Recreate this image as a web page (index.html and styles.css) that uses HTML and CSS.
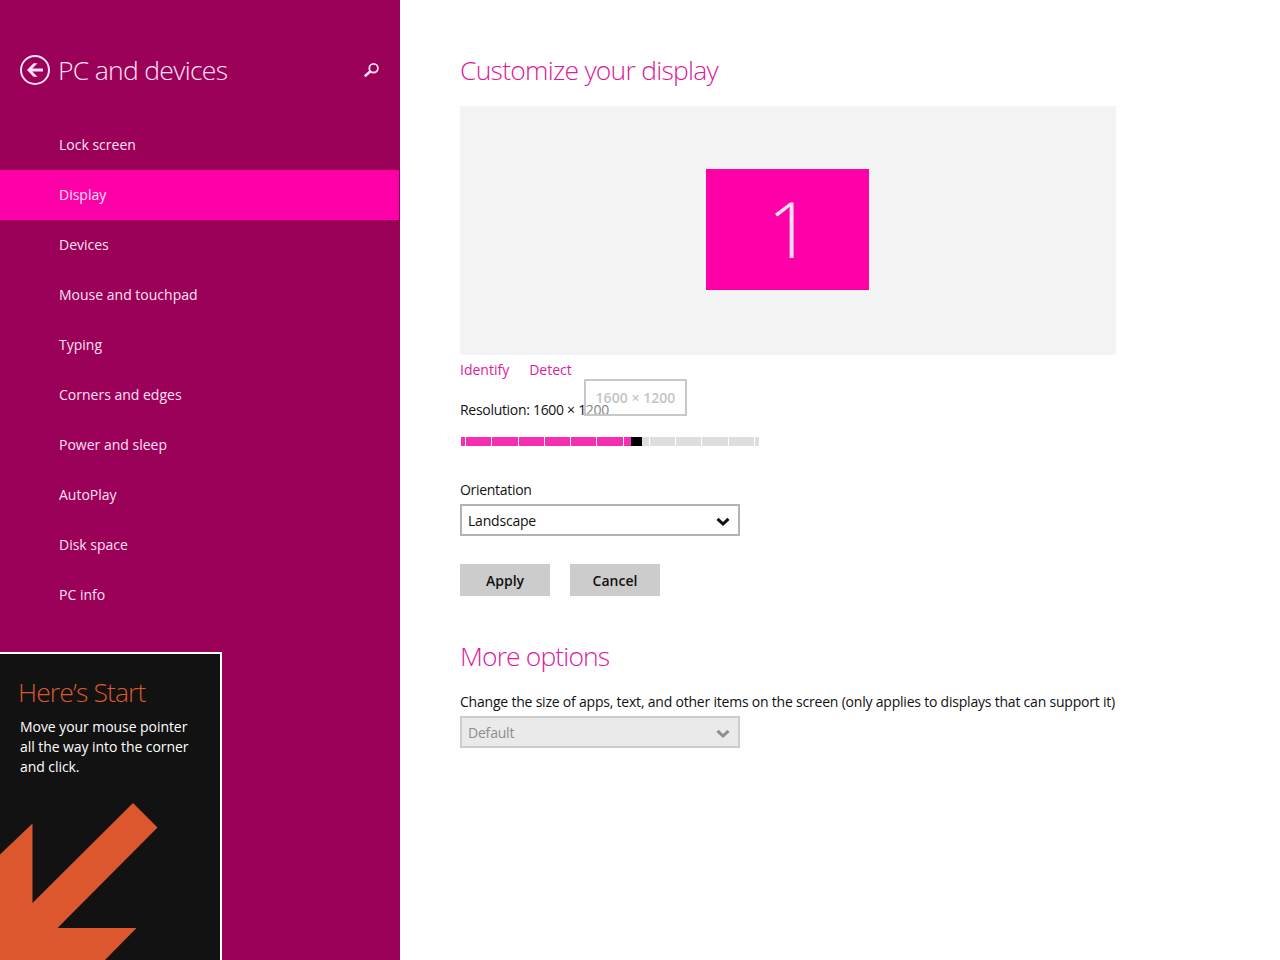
FILE: index.html
```html
<!DOCTYPE html>
<html lang="en">
<head>
    <meta charset="UTF-8">
    <meta name="viewport" content="width=device-width, initial-scale=1.0">
    <title>PC and devices</title>
    <link rel="stylesheet" href="styles.css">
</head>
<body>
    <aside class="sidebar">
        <header class="sidebar-header">
            <a href="#" class="back" aria-label="Back">
                <svg width="30" height="30" viewBox="0 0 30 30">
                    <circle cx="15" cy="15" r="14" fill="none" stroke="currentColor" stroke-width="2"/>
                    <path d="M7 15l6.5-6.8h4L12.3 13.5H23v3H12.3l5.2 5.3h-4z" fill="currentColor"/>
                </svg>
            </a>
            <h1>PC and devices</h1>
            <a href="#" class="search" aria-label="Search">
                <svg width="16" height="16" viewBox="0 0 16 16" fill="none" stroke="currentColor">
                    <circle cx="9.600" cy="6.200" r="4.300" stroke-width="1.800"/>
                    <path d="M6.500 9.300L0.800 14.200" stroke-width="2.500"/>
                </svg>
            </a>
        </header>
        <ul class="navbar">
            <li><a href="#">Lock screen</a></li>
            <li><a href="#" class="active">Display</a></li>
            <li><a href="#">Devices</a></li>
            <li><a href="#">Mouse and touchpad</a></li>
            <li><a href="#">Typing</a></li>
            <li><a href="#">Corners and edges</a></li>
            <li><a href="#">Power and sleep</a></li>
            <li><a href="#">AutoPlay</a></li>
            <li><a href="#">Disk space</a></li>
            <li><a href="#">PC info</a></li>
        </ul>

        <!-- Start corner hint -->
        <div class="hint">
            <h2>Here’s Start</h2>
            <p>Move your mouse pointer<br>all the way into the corner<br>and click.</p>
            <svg class="hint-arrow" width="158" height="158" viewBox="0 802 158 158">
                <path d="M133 803L157.500 827.500L57.500 928H136.500L105 960H0V854.500L32.500 823.500V903z" fill="#dc572e"/>
            </svg>
        </div>
    </aside>

    <main class="content">
        <h2>Customize your display</h2>
        <div class="preview">
            <div class="monitor">1</div>
        </div>
        <div class="links">
            <a href="#">Identify</a>
            <a href="#">Detect</a>
        </div>

        <div class="resolution">
            <p>Resolution: 1600 × 1200</p>
            <div class="tooltip">1600 × 1200</div>
        </div>
        <div class="slider">
            <span class="edge"></span>
            <span></span><span></span><span></span><span></span><span></span><span></span>
            <span></span><span></span><span></span><span></span><span></span>
            <i class="thumb"></i>
        </div>

        <p class="label">Orientation</p>
        <div class="select">
            <span>Landscape</span>
            <svg width="14" height="10" viewBox="0 0 14 10"><path d="M1.500 1.800L7 7L12.500 1.800" fill="none" stroke="currentColor" stroke-width="3"/></svg>
        </div>
        <div class="buttons">
            <button type="button">Apply</button>
            <button type="button">Cancel</button>
        </div>

        <h2 class="title-more">More options</h2>
        <p class="size-label">Change the size of apps, text, and other items on the screen (only applies to displays that can support it)</p>
        <div class="select disabled">
            <span>Default</span>
            <svg width="14" height="10" viewBox="0 0 14 10"><path d="M1.500 1.800L7 7L12.500 1.800" fill="none" stroke="currentColor" stroke-width="3"/></svg>
        </div>
    </main>
</body>
</html>
```
FILE: styles.css
```css
* {
    margin: 0;
    padding: 0;
    box-sizing: border-box;
}

body {
    display: flex;
    height: 960px;
    overflow: hidden;
    background: #fff;
    color: #111;
    font-family: 'Open Sans', sans-serif;
    font-size: 14px;
    line-height: 20px;
    letter-spacing: -0.3px;
}

a {
    color: inherit;
    text-decoration: none;
}

h1, h2 {
    font-size: 26.5px;
    font-weight: 300;
    line-height: 36px;
    white-space: nowrap;
}

/* Sidebar */
.sidebar {
    position: relative;
    width: 400px;
    flex-shrink: 0;
    background: #9b0058;
    color: #ffe0f6;
}

.sidebar-header {
    display: flex;
    align-items: center;
    height: 120px;
    padding: 20px 20px 0;
}

.back, .search {
    display: flex;
}

.sidebar-header h1 {
    flex: 1;
    margin-left: 8px;
    letter-spacing: -0.7px;
}

.navbar {
    list-style-type: none;
    letter-spacing: 0;
}

.navbar a {
    display: block;
    width: 399px;
    height: 50px;
    padding-left: 59px;
    line-height: 50px;
}

.navbar a.active {
    background: #ff00a8;
}

/* Corner hint */
.hint {
    position: absolute;
    left: 0;
    bottom: 0;
    width: 222px;
    height: 308px;
    border: solid #fff;
    border-width: 2px 2px 0 0;
    padding: 20px 0 0 20px;
    background: #111211;
    color: #fff;
}

.hint h2 {
    margin-left: -2px;
    color: #dc572e;
    letter-spacing: -0.88px;
}

.hint p {
    margin-top: 7px;
    letter-spacing: -0.06px;
}

.hint-arrow {
    position: absolute;
    left: 0;
    bottom: 0;
}

/* Content */
.content {
    width: 716px;
    padding: 52px 0 0 60px;
}

.content h2 {
    color: #dc1a9c;
    letter-spacing: -0.75px;
}

.preview {
    display: flex;
    justify-content: center;
    align-items: flex-start;
    width: 656px;
    height: 249px;
    margin-top: 18px;
    padding: 63px 1px 0 0;
    background: #f4f4f4;
}

.monitor {
    width: 163px;
    height: 121px;
    padding-left: 4px;
    background: #ff00a8;
    color: #ffe0f6;
    font-size: 78px;
    font-weight: 300;
    line-height: 119px;
    text-align: center;
}

.links {
    display: flex;
    gap: 20px;
    margin-top: 5px;
    color: #dc1a9c;
    letter-spacing: 0;
}

.resolution {
    position: relative;
    margin-top: 20px;
}

.tooltip {
    position: absolute;
    left: 124px;
    top: -21px;
    width: 103px;
    height: 37px;
    border: 2px solid #c8c8c8;
    background: rgba(255, 255, 255, 0.45);
    color: #c4c4c4;
    font-weight: 600;
    letter-spacing: 0.05px;
    line-height: 33px;
    text-align: center;
}

.slider {
    position: relative;
    display: flex;
    width: 299px;
    height: 9px;
    margin-top: 17px;
    background: linear-gradient(to right, #f42fb2 176px, #dedede 176px);
}

.slider span {
    flex: 1;
    border-right: 1px solid #fff;
}

.slider .edge {
    flex: 0 0 6px;
    border-left: 1px solid #fff;
}

.slider::after {
    content: "";
    width: 4px;
}

.thumb {
    position: absolute;
    left: 171px;
    top: 0;
    width: 11px;
    height: 9px;
    background: #000;
}

.label {
    margin-top: 34px;
}

.select {
    display: flex;
    justify-content: space-between;
    align-items: center;
    width: 280px;
    height: 32px;
    margin-top: 4px;
    padding: 2px 8px 0 6px;
    border: 2px solid #b3b3b3;
    color: #111;
    letter-spacing: -0.2px;
}

.select svg {
    margin-top: 1px;
}

.disabled {
    border-color: #ccc;
    background: #eaeaea;
    color: #8e8e8e;
}

.buttons {
    display: flex;
    gap: 20px;
    margin-top: 28px;
}

button {
    width: 90px;
    height: 32px;
    border: none;
    background: #ccc;
    color: #111;
    font: 600 14px 'Open Sans', sans-serif;
    letter-spacing: 0;
}

.title-more {
    margin-top: 42px;
}

.content .title-more {
    letter-spacing: -0.88px;
}

.size-label {
    margin-top: 18px;
    letter-spacing: -0.21px;
    white-space: nowrap;
}
```
